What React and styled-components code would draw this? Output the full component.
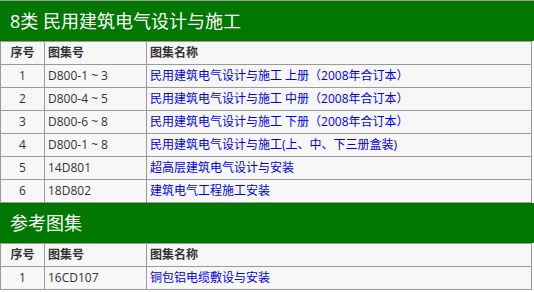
import styled, { createGlobalStyle } from "styled-components";

const GlobalStyle = createGlobalStyle`
  body {
    margin: 0;
    background: #fff;
    font-family: "Open Sans", "Noto Sans CJK SC", sans-serif;
  }
`;

const groups = [
  {
    title: "8类 民用建筑电气设计与施工",
    rows: [
      ["1", "D800-1 ~ 3", "民用建筑电气设计与施工 上册（2008年合订本）"],
      ["2", "D800-4 ~ 5", "民用建筑电气设计与施工 中册（2008年合订本）"],
      ["3", "D800-6 ~ 8", "民用建筑电气设计与施工 下册（2008年合订本）"],
      ["4", "D800-1 ~ 8", "民用建筑电气设计与施工(上、中、下三册盒装)"],
      ["5", "14D801", "超高层建筑电气设计与安装"],
      ["6", "18D802", "建筑电气工程施工安装"],
    ],
  },
  {
    title: "参考图集",
    rows: [["1", "16CD107", "铜包铝电缆敷设与安装"]],
  },
];

function App() {
  return (
    <>
      <GlobalStyle />
      <Page>
        {groups.map((group) => (
          <Section key={group.title}>
            <Title>{group.title}</Title>
            <Table>
              <colgroup>
                <col style={{ width: 44 }} />
                <col style={{ width: 102 }} />
                <col />
              </colgroup>
              <thead>
                <tr>
                  <Th center>序号</Th>
                  <Th>图集号</Th>
                  <Th>图集名称</Th>
                </tr>
              </thead>
              <tbody>
                {group.rows.map(([no, code, name]) => (
                  <tr key={no + code}>
                    <Td center>{no}</Td>
                    <Td>{code}</Td>
                    <Td>
                      <BookLink href="#">{name}</BookLink>
                    </Td>
                  </tr>
                ))}
              </tbody>
            </Table>
          </Section>
        ))}
      </Page>
    </>
  );
}

const Page = styled.div`
  width: 534px;
  border-top: 1px solid #9a9a9a;
`;

const Section = styled.section`
  display: flex;
  flex-direction: column;
`;

const Title = styled.h2`
  margin: 0;
  height: 40px;
  padding-left: 10px;
  background: #007800;
  color: #fff;
  font-size: 18px;
  font-weight: normal;
  line-height: 40px;
`;

const Table = styled.table`
  width: 532px;
  border-collapse: collapse;
  table-layout: fixed;
  background: #f7f7f7;
  border: 1px solid #9a9a9a;
  font-size: 12px;
  color: #333;
`;

const Th = styled.th`
  height: 22px;
  padding: 0 3px;
  border: 1px solid #9a9a9a;
  text-align: ${(p) => (p.center ? "center" : "left")};
  font-weight: bold;
  line-height: 22px;
`;

const Td = styled.td`
  height: 22px;
  padding: 0 3px;
  border: 1px solid #9a9a9a;
  text-align: ${(p) => (p.center ? "center" : "left")};
  line-height: 22px;
  white-space: nowrap;
`;

const BookLink = styled.a`
  color: #0000ee;
  text-decoration: none;
`;

export default App;
